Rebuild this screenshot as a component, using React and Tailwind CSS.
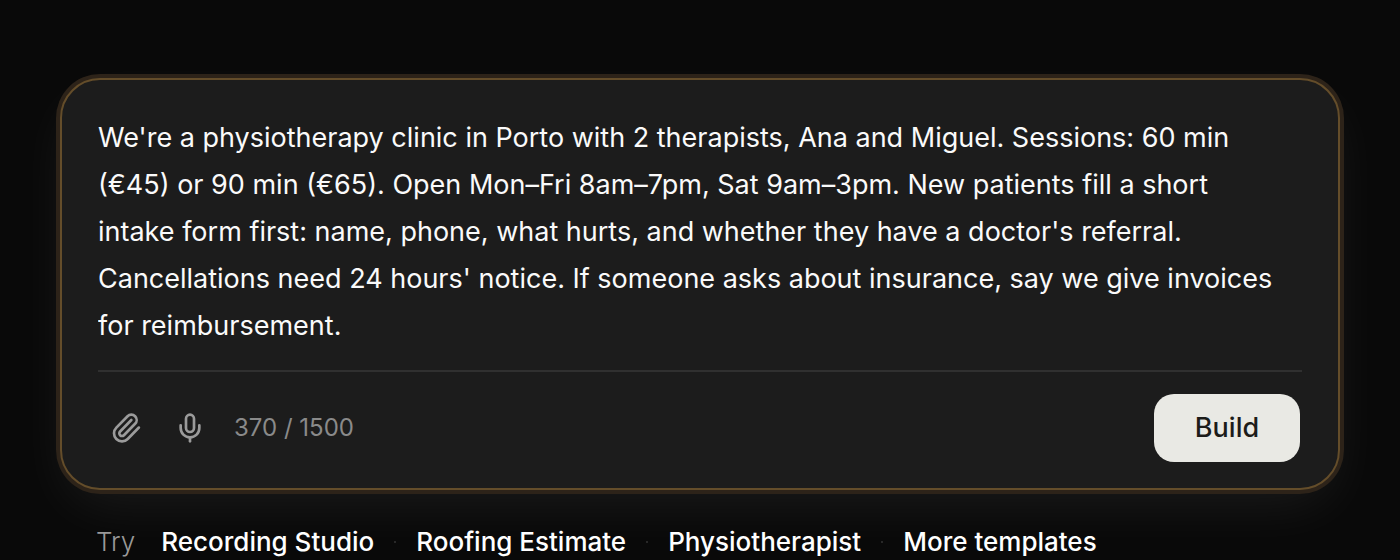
import { useState } from "react";
import { Mic, Paperclip } from "lucide-react";

const INITIAL_PROMPT =
  "We're a physiotherapy clinic in Porto with 2 therapists, Ana and Miguel. Sessions: 60 min (€45) or 90 min (€65). Open Mon–Fri 8am–7pm, Sat 9am–3pm. New patients fill a short intake form first: name, phone, what hurts, and whether they have a doctor's referral. Cancellations need 24 hours' notice. If someone asks about insurance, say we give invoices for reimbursement.";

const TEMPLATES = ["Recording Studio", "Roofing Estimate", "Physiotherapist", "More templates"];

export default function App() {
  const [prompt, setPrompt] = useState(INITIAL_PROMPT);

  return (
    <main className="min-h-screen overflow-hidden bg-[#090909] px-15 pt-[78px] font-['Inter','Liberation_Sans',sans-serif] text-white">
      <form
        onSubmit={(e) => e.preventDefault()}
        className="rounded-[40px] border-2 border-[#644d2a] bg-[#1c1c1c] px-9 pt-[34px] pb-[26px] shadow-[0_0_0_4px_#2d2319,0_20px_56px_-8px_rgba(255,255,255,0.08)]"
      >
        <textarea
          aria-label="Describe your business"
          rows={5}
          value={prompt}
          onChange={(e) => setPrompt(e.target.value)}
          className="block w-full resize-none overflow-hidden bg-transparent pr-4 text-[27px] leading-[47px] text-[#fafafa] outline-none"
        />
        <div className="mt-[21px] flex items-center justify-between border-t-2 border-[#303030] pt-[22px] pr-0.5">
          <div className="flex items-center text-[#9b9b9b]">
            <button type="button" aria-label="Attach file" className="flex h-14 w-14 items-center justify-center">
              <Paperclip className="size-8" aria-hidden="true" />
            </button>
            <button type="button" aria-label="Dictate" className="ml-2 flex h-14 w-14 items-center justify-center">
              <Mic className="size-8" aria-hidden="true" />
            </button>
            <span className="ml-4 text-2xl text-[#8a8a8a]">{prompt.length} / 1500</span>
          </div>
          <button
            type="submit"
            className="h-[68px] w-[146px] rounded-[20px] bg-[#e9e9e4] text-[27px] font-medium text-[#1c1c1a]"
          >
            Build
          </button>
        </div>
      </form>
      <nav aria-label="Templates" className="flex items-center pt-8 pl-9 text-[26px] leading-10 whitespace-nowrap">
        <span className="mr-[26px] font-light text-[#999999]">Try</span>
        {TEMPLATES.map((name, i) => (
          <span key={name} className="flex items-center">
            {i > 0 && <span className="mx-5 size-0.5 rounded-full bg-[#333333]" aria-hidden="true" />}
            <a href="#templates" className="font-medium">
              {name}
            </a>
          </span>
        ))}
      </nav>
    </main>
  );
}
